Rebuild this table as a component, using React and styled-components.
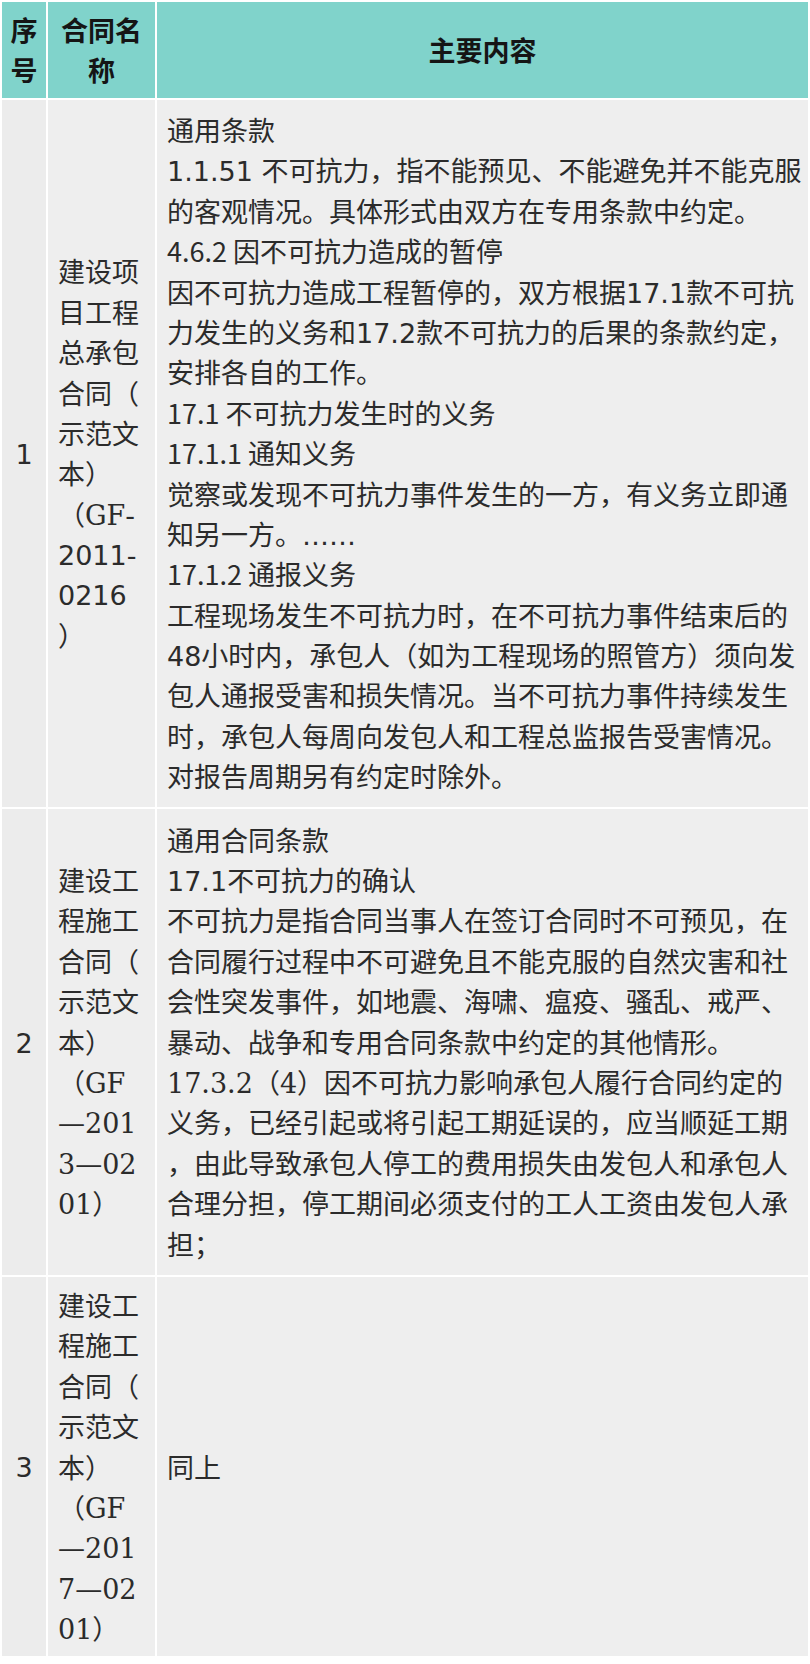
import React from 'react';
import styled, { createGlobalStyle } from 'styled-components';

const GlobalStyle = createGlobalStyle`
  * { box-sizing: border-box; }
  html, body { margin: 0; padding: 0; background: #fff; }
  body { font-family: "Noto Sans CJK SC", sans-serif; }
`;

const Table = styled.table`
  width: 810px;
  border-collapse: separate;
  border-spacing: 2px;
  table-layout: fixed;
  background: #fff;
  font-family: "Noto Sans CJK SC", sans-serif;
  font-size: 27px;
  color: #2b2b2b;
`;

const HeadCell = styled.th`
  width: ${p => p.$w ? `${p.$w}px` : 'auto'};
  background: #80d3cb;
  color: #151515;
  font-weight: 700;
  line-height: 40px;
  padding: 8px ${p => p.$pad}px;
  text-align: center;
  vertical-align: middle;
`;

const Cell = styled.td`
  background: ${p => p.$tone || '#eeeeee'};
  padding: ${p => p.$padY ?? 10}px ${p => p.$pad}px;
  line-height: 40.4px;
  text-align: ${p => p.$center ? 'center' : 'left'};
  vertical-align: middle;
`;

const Line = styled.div`
  height: ${p => p.$h || 40.4}px;
  white-space: nowrap;
`;

const Num = styled.span`
  font-family: ${p => p.$serif ? '"DejaVu Serif", serif' : '"DejaVu Sans", sans-serif'};
  line-height: 1;
`;

const Lines = ({ items }) => items.map((l, i) => <Line key={i}>{l}</Line>);

const rows = [
  {
    no: '1',
    padY: 10,
    name: [
      '建设项', '目工程', '总承包', '合同（', '示范文', '本）',
      <>（<Num $serif>GF</Num><Num>-</Num></>,
      <Num>2011-</Num>,
      <Num>0216</Num>,
      '）',
    ],
    body: [
      '通用条款',
      <><Num>1.1.51 </Num>不可抗力，指不能预见、不能避免并不能克服</>,
      '的客观情况。具体形式由双方在专用条款中约定。',
      '4.6.2 因不可抗力造成的暂停',
      <>因不可抗力造成工程暂停的，双方根据<Num>17.1</Num>款不可抗</>,
      <>力发生的义务和<Num>17.2</Num>款不可抗力的后果的条款约定，</>,
      '安排各自的工作。',
      '17.1 不可抗力发生时的义务',
      '17.1.1 通知义务',
      '觉察或发现不可抗力事件发生的一方，有义务立即通',
      <>知另一方。<Num>……</Num></>,
      '17.1.2 通报义务',
      '工程现场发生不可抗力时，在不可抗力事件结束后的',
      <><Num>48</Num>小时内，承包人（如为工程现场的照管方）须向发</>,
      '包人通报受害和损失情况。当不可抗力事件持续发生',
      '时，承包人每周向发包人和工程总监报告受害情况。',
      '对报告周期另有约定时除外。',
    ],
  },
  {
    no: '2',
    padY: 11,
    name: [
      '建设工', '程施工', '合同（', '示范文', '本）',
      <>（<Num $serif>GF</Num></>,
      <Num $serif>—201</Num>,
      <Num $serif>3—02</Num>,
      <><Num $serif>01</Num>）</>,
    ],
    body: [
      '通用合同条款',
      <><Num>17.1</Num>不可抗力的确认</>,
      '不可抗力是指合同当事人在签订合同时不可预见，在',
      '合同履行过程中不可避免且不能克服的自然灾害和社',
      '会性突发事件，如地震、海啸、瘟疫、骚乱、戒严、',
      '暴动、战争和专用合同条款中约定的其他情形。',
      <><Num $serif>17.3.2</Num>（<Num $serif>4</Num>）因不可抗力影响承包人履行合同约定的</>,
      '义务，已经引起或将引起工期延误的，应当顺延工期',
      '，由此导致承包人停工的费用损失由发包人和承包人',
      '合理分担，停工期间必须支付的工人工资由发包人承',
      '担；',
    ],
  },
  {
    no: '3',
    padY: 8,
    name: [
      '建设工', '程施工', '合同（', '示范文', '本）',
      <>（<Num $serif>GF</Num></>,
      <Num $serif>—201</Num>,
      <Num $serif>7—02</Num>,
      <><Num $serif>01</Num>）</>,
    ],
    body: ['同上'],
  },
];

export default function App() {
  return (
    <>
      <GlobalStyle />
      <Table>
        <thead>
          <tr>
            <HeadCell $w={44} $pad={6}><Line $h={40}>序</Line><Line $h={40}>号</Line></HeadCell>
            <HeadCell $w={107} $pad={10}><Line $h={40}>合同名</Line><Line $h={40}>称</Line></HeadCell>
            <HeadCell $pad={10}>主要内容</HeadCell>
          </tr>
        </thead>
        <tbody>
          {rows.map(r => (
            <tr key={r.no}>
              <Cell $tone="#ececec" $pad={6} $padY={r.padY} $center><Num>{r.no}</Num></Cell>
              <Cell $pad={10} $padY={r.padY}><Lines items={r.name} /></Cell>
              <Cell $pad={10} $padY={r.padY}><Lines items={r.body} /></Cell>
            </tr>
          ))}
        </tbody>
      </Table>
    </>
  );
}
